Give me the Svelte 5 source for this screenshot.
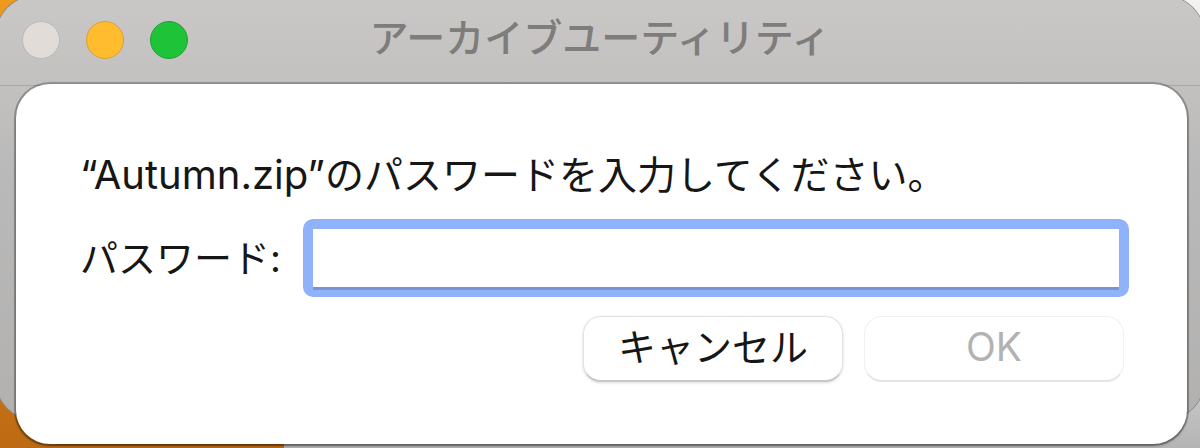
<script>
    let password = $state('');

    const lights = [
        { name: 'close', label: '閉じる' },
        { name: 'minimize', label: 'しまう' },
        { name: 'zoom', label: '拡大' }
    ];
</script>

<div class="desktop">
    <div class="window">
        <header class="titlebar">
            <div class="lights">
                {#each lights as light}
                    <button type="button" class="light {light.name}" aria-label={light.label}></button>
                {/each}
            </div>
            <h1>アーカイブユーティリティ</h1>
        </header>

        <form class="sheet" onsubmit={(e) => e.preventDefault()}>
            <p><span>“Autumn.zip”</span>のパスワードを入力してください。</p>

            <div class="field">
                <label for="password">パスワード:</label>
                <input id="password" type="password" bind:value={password} />
            </div>

            <div class="actions">
                <button type="button" class="cancel">キャンセル</button>
                <button type="submit" class="ok" disabled={!password}>OK</button>
            </div>
        </form>
    </div>
</div>

<style>
    :global(body) {
        font-family: Inter, "Noto Sans CJK JP", sans-serif;
        margin: 0;
    }

    /* wallpaper: orange on the left, grey window behind on the right */
    .desktop {
        min-height: 100vh;
        box-sizing: border-box;
        overflow: hidden;
        background:
            linear-gradient(#f09a1c, #bd6a14) left / 284px 100% no-repeat,
            linear-gradient(#f2f2f2 0%, #d2d2d2 80%, #b4b4b4 100%);
    }

    .window {
        display: flow-root;
        margin: -4px -4px 0;
        border-radius: 40px;
        background: linear-gradient(#cac8c6, #c2c1bf 90px, #bab9b9 180px, #b2b1b0);
        box-shadow: 0 0 0 1px #8d8b89;
    }

    /* title bar */
    .titlebar {
        display: grid;
        grid-template-columns: 1fr auto 1fr;
        align-items: center;
        height: 90px;
        padding: 0 26px 2px;
        border-bottom: 1px solid #aaa8a7;
        box-sizing: border-box;
    }

    .lights {
        display: flex;
        gap: 26px;
    }

    .light {
        width: 38px;
        height: 38px;
        padding: 0;
        border: 1px solid #bdbab8;
        border-radius: 50%;
    }

    .close {
        background: #e2dcd8;
    }
    .minimize {
        background: #febc2e;
        border-color: #dc9f33;
    }
    .zoom {
        background: #1ec337;
        border-color: #22a033;
    }

    h1 {
        margin: 0;
        padding-bottom: 4px;
        font-size: 39px;
        line-height: 60px;
        font-weight: 500;
        color: #7f7d7c;
    }

    /* password sheet hangs over the lower window edge */
    .sheet {
        position: relative;
        margin: -2px 17px -24px 20px;
        padding: 65px 63px 62px 64px;
        border-radius: 34px;
        background: #fff;
        color: #161616;
        box-shadow: 0 0 0 2px rgba(0, 0, 0, 0.25), 0 2px 3px rgba(0, 0, 0, 0.3);
    }

    p {
        margin: 0 0 18px;
        font-size: 39px;
        line-height: 52px;
    }

    p span {
        font-size: 40px;
    }

    .field {
        display: flex;
        align-items: center;
        gap: 22px;
        margin: 0 -5px 19px 0;
    }

    label {
        font-size: 38px;
        line-height: 52px;
    }

    input {
        flex: 1;
        min-width: 0;
        height: 78px;
        padding: 0 10px;
        border: 10px solid #8fb2fb;
        border-bottom-width: 7px;
        border-radius: 10px;
        box-sizing: border-box;
        background: #fff;
        box-shadow: inset 0 -3px #7b93cf;
        font-family: inherit;
        font-size: 38px;
        outline: none;
    }

    .actions {
        display: flex;
        justify-content: flex-end;
        gap: 21px;
    }

    .actions button {
        width: 260px;
        height: 66px;
        padding: 0 0 4px;
        border: 1px solid #e2e2e2;
        border-bottom: 2px solid #c8c8c8;
        border-radius: 18px;
        background: #fff;
        color: #161616;
        font-family: inherit;
        font-size: 38px;
        line-height: 56px;
    }

    .actions .cancel {
        box-shadow: 0 1px 3px rgba(0, 0, 0, 0.15);
    }

    .actions .ok {
        font-size: 39px;
    }

    .actions .ok:disabled {
        border-color: #f0f0f0;
        border-bottom-color: #e4e4e4;
        color: #b2b2b2;
    }
</style>
